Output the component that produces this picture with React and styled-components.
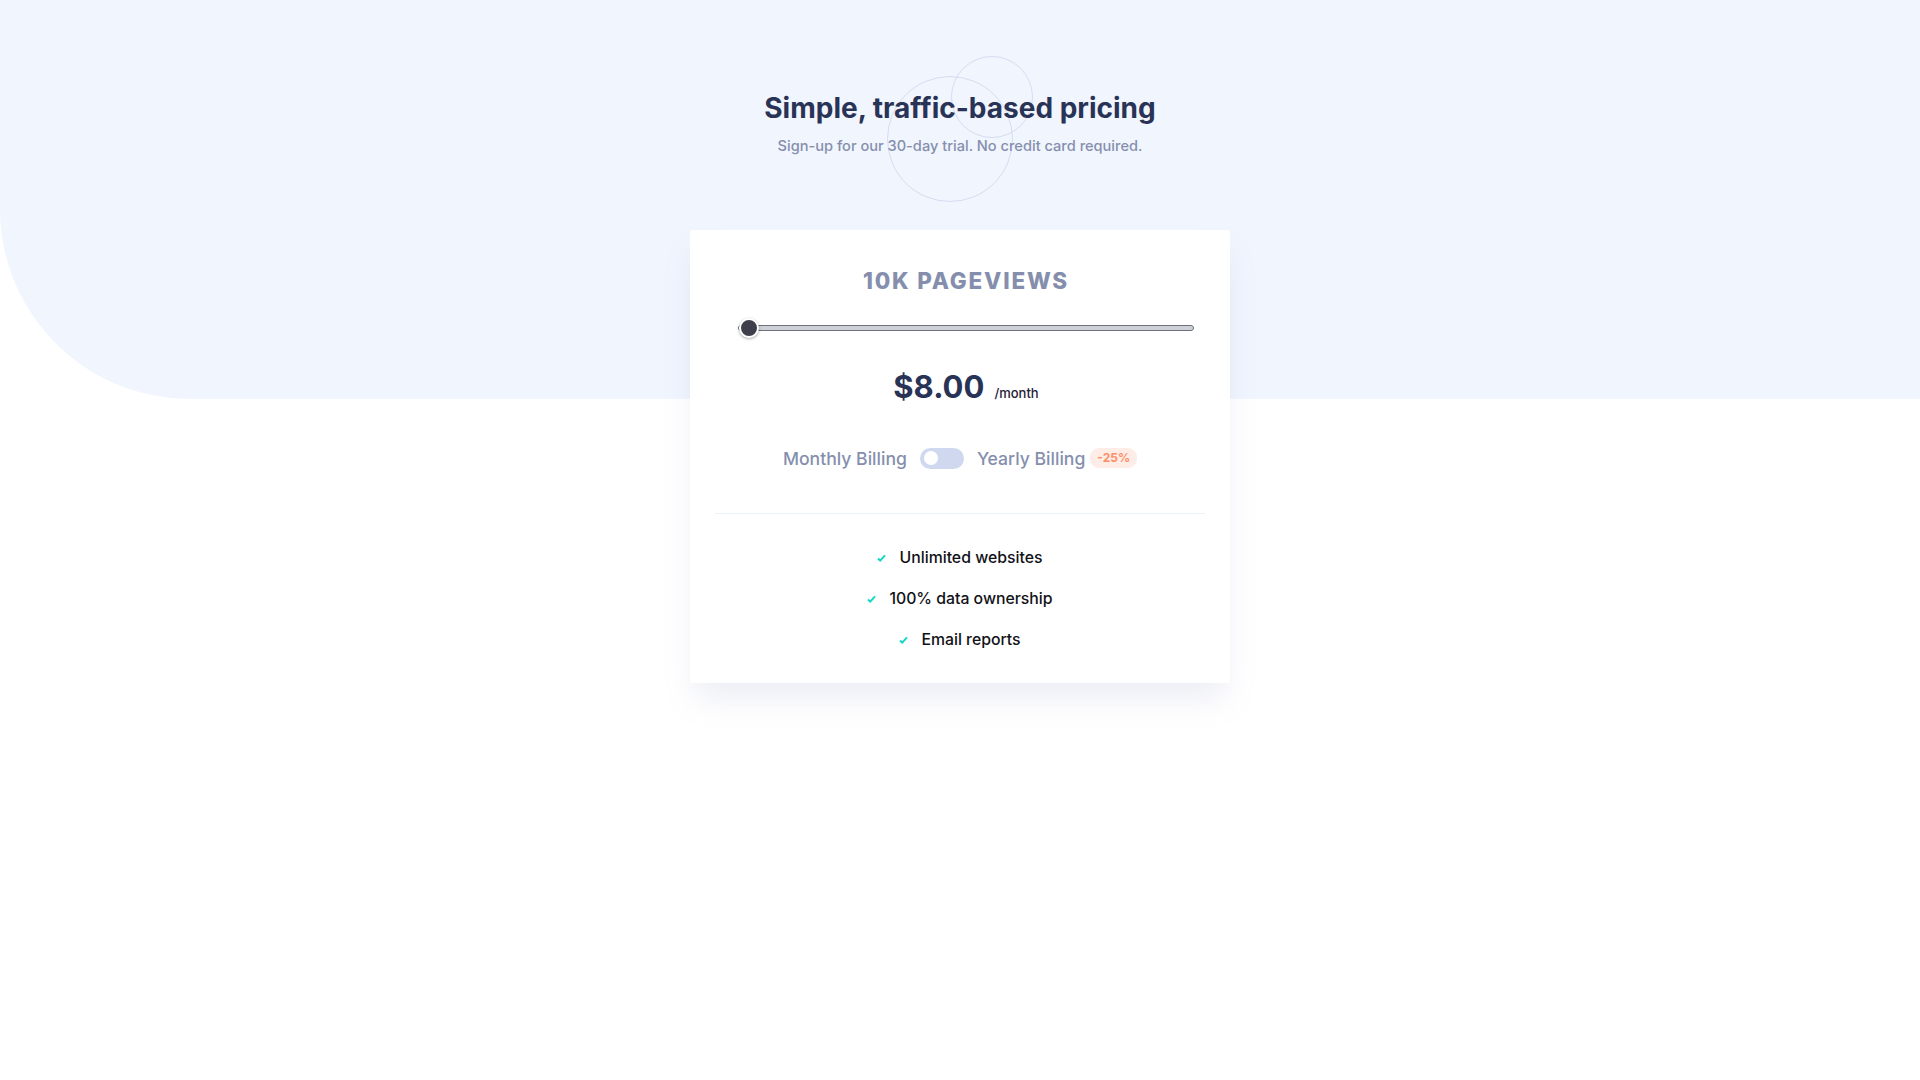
import React, { useState } from "react";
import styled, { createGlobalStyle } from "styled-components";

const GlobalStyle = createGlobalStyle`
  * { box-sizing: border-box; }
  body {
    margin: 0;
    background: #ffffff;
    font-family: Inter, "Noto Sans", sans-serif;
  }
`;

const Page = styled.div`
  position: relative;
  min-height: 100vh;
  display: flex;
  flex-direction: column;
  align-items: center;

  &::before {
    content: "";
    position: absolute;
    top: 0;
    left: 0;
    right: 0;
    height: 399px;
    background: #f1f5fe;
    border-bottom-left-radius: 190px;
    z-index: 0;
  }
`;

const Header = styled.header`
  position: relative;
  z-index: 1;
  width: 100%;
  padding-top: 91px;
  display: flex;
  flex-direction: column;
  align-items: center;
`;

const Circle = styled.span`
  position: absolute;
  top: ${(p) => p.top}px;
  left: calc(50% + ${(p) => p.offset}px);
  width: ${(p) => p.size}px;
  height: ${(p) => p.size}px;
  border: 1px solid #d6dcf2;
  border-radius: 50%;
  z-index: -1;
`;

const Title = styled.h1`
  margin: 0;
  font-size: 28px;
  line-height: 34px;
  font-weight: 700;
  color: #293356;
`;

const Subtitle = styled.p`
  margin: 11px 0 0;
  font-size: 14.6px;
  line-height: 20px;
  font-weight: 500;
  color: #858fad;
`;

const Card = styled.main`
  position: relative;
  z-index: 1;
  width: 540px;
  margin-top: 74px;
  padding: 36px 25px 31px;
  background: #ffffff;
  border-radius: 2px;
  box-shadow: 0 20px 30px -5px rgba(127, 137, 185, 0.15);
  display: flex;
  flex-direction: column;
  align-items: center;
`;

const Views = styled.h2`
  margin: 0 0 0 12px;
  font-size: 22.5px;
  line-height: 30px;
  font-weight: 800;
  letter-spacing: 1.8px;
  color: #858fad;
`;

const Range = styled.input`
  -webkit-appearance: none;
  appearance: none;
  align-self: stretch;
  margin: 22px 11px 0 23px;
  height: 20px;
  background: transparent;

  &::-webkit-slider-runnable-track {
    height: 6px;
    border-radius: 3px;
    background: #cfd1d9;
    border: 1px solid #6e7080;
  }

  &::-webkit-slider-thumb {
    -webkit-appearance: none;
    width: 20px;
    height: 20px;
    margin-top: -8px;
    border-radius: 50%;
    background: #3e3f4b;
    border: 2px solid #ffffff;
    box-shadow: 0 1px 3px rgba(0, 0, 0, 0.35);
  }
`;

const PriceRow = styled.div`
  margin: 27px 0 0 12px;
  display: flex;
  align-items: baseline;
  gap: 10px;
`;

const Price = styled.span`
  font-size: 31px;
  line-height: 44px;
  font-weight: 700;
  color: #293356;
`;

const Period = styled.span`
  font-size: 13px;
  font-weight: 500;
  color: #1f2033;
`;

const BillingRow = styled.div`
  margin-top: 37px;
  height: 24px;
  display: flex;
  align-items: center;
`;

const BillingLabel = styled.span`
  font-size: 17.6px;
  font-weight: 500;
  color: #858fad;
`;

const Toggle = styled.button`
  position: relative;
  width: 44px;
  height: 21px;
  margin: 0 13px;
  padding: 0;
  border: none;
  border-radius: 11px;
  background: ${(p) => (p.on ? "#7aeadf" : "#cfd8ef")};
  cursor: pointer;

  &::after {
    content: "";
    position: absolute;
    top: 3.5px;
    left: ${(p) => (p.on ? "26px" : "4px")};
    width: 14px;
    height: 14px;
    border-radius: 50%;
    background: #ffffff;
  }
`;

const Badge = styled.span`
  margin-left: 5px;
  padding: 2px 7px;
  border-radius: 9px;
  background: #feece7;
  color: #ff8d68;
  font-size: 12px;
  line-height: 16px;
  font-weight: 700;
`;

const Divider = styled.hr`
  align-self: stretch;
  margin: 43px 0 0;
  border: none;
  border-top: 1px solid #ecf0fb;
`;

const Features = styled.ul`
  margin: 32px 0 0;
  padding: 0;
  list-style: none;
  display: flex;
  flex-direction: column;
  align-items: center;
  gap: 17px;
`;

const Feature = styled.li`
  display: flex;
  align-items: center;
  gap: 13px;
  font-size: 15.8px;
  line-height: 24px;
  font-weight: 500;
  color: #111118;
`;

const Check = () => (
  <svg width="9" height="8" viewBox="0 0 9 8">
    <path d="M1 4.6 3.2 6.6 8 1.4" fill="none" stroke="#10d8c4" strokeWidth="2" />
  </svg>
);

const features = ["Unlimited websites", "100% data ownership", "Email reports"];

export default function App() {
  const [yearly, setYearly] = useState(false);
  const [views, setViews] = useState(0);

  return (
    <Page>
      <GlobalStyle />
      <Header>
        <Circle top={76} offset={-73} size={126} />
        <Circle top={56} offset={-9} size={82} />
        <Title>Simple, traffic-based pricing</Title>
        <Subtitle>Sign-up for our 30-day trial. No credit card required.</Subtitle>
      </Header>
      <Card>
        <Views>10K PAGEVIEWS</Views>
        <Range
          type="range"
          min="0"
          max="4"
          value={views}
          onChange={(e) => setViews(Number(e.target.value))}
        />
        <PriceRow>
          <Price>$8.00</Price>
          <Period>/month</Period>
        </PriceRow>
        <BillingRow>
          <BillingLabel>Monthly Billing</BillingLabel>
          <Toggle on={yearly} onClick={() => setYearly(!yearly)} aria-label="toggle billing" />
          <BillingLabel>Yearly Billing</BillingLabel>
          <Badge>-25%</Badge>
        </BillingRow>
        <Divider />
        <Features>
          {features.map((f) => (
            <Feature key={f}>
              <Check />
              {f}
            </Feature>
          ))}
        </Features>
      </Card>
    </Page>
  );
}
